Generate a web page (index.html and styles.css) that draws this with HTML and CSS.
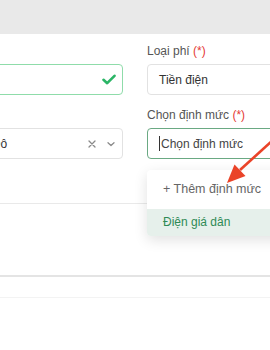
FILE: index.html
```html
<!DOCTYPE html>
<html lang="vi">
<head>
    <meta charset="UTF-8">
    <meta name="viewport" content="width=device-width, initial-scale=1.0">
    <title>Thêm phí</title>
    <link rel="stylesheet" href="styles.css">
</head>
<body>
    <div class="topbar"></div>

    <div class="form">
        <div class="field">
            <label class="label">Khách hàng <span class="req">(*)</span></label>
            <div class="input valid">
                <span class="value">Nguyễn Văn An</span>
                <svg class="check" width="14" height="11" viewBox="0 0 14 11">
                    <path d="M1.5 5.8 L5.2 9.2 L12.5 1.8" fill="none" stroke="#2bb566" stroke-width="2.6" stroke-linecap="round" stroke-linejoin="round"/>
                </svg>
            </div>
        </div>
        <div class="field">
            <label class="label">Loại phí <span class="req">(*)</span></label>
            <div class="input">
                <span class="value">Tiền điện</span>
            </div>
        </div>
        <div class="field">
            <label class="label">Căn hộ <span class="req">(*)</span></label>
            <div class="input">
                <span class="value">Chung cư Thủ Đô</span>
                <span class="icons">
                    <svg width="10" height="10" viewBox="0 0 10 10">
                        <path d="M2 2 L8 8 M8 2 L2 8" stroke="#8a8a8a" stroke-width="1.3" stroke-linecap="round"/>
                    </svg>
                    <svg width="10" height="10" viewBox="0 0 10 10">
                        <path d="M2 3.8 L5 6.6 L8 3.8" fill="none" stroke="#8a8a8a" stroke-width="1.3" stroke-linecap="round" stroke-linejoin="round"/>
                    </svg>
                </span>
            </div>
        </div>
        <div class="field picker">
            <label class="label">Chọn định mức <span class="req">(*)</span></label>
            <div class="input focused">
                <span class="caret"></span>
                <span class="value">Chọn định mức</span>
            </div>
            <div class="dropdown">
                <div class="option add">+ Thêm định mức</div>
                <div class="option active">Điện giá dân</div>
            </div>
        </div>
    </div>

    <div class="spacer"></div>
    <div class="table-head"></div>

    <!-- annotation arrow -->
    <svg class="arrow" width="270" height="350" viewBox="0 0 270 350">
        <line x1="274" y1="139" x2="240" y2="170" stroke="#ea4328" stroke-width="2.6"/>
        <polygon points="227,183 245.5,176 234.5,164.5" fill="#ea4328"/>
    </svg>
</body>
</html>
```

FILE: styles.css
```css
body {
    margin: 0;
    font-family: "Liberation Sans", Arial, sans-serif;
    font-size: 12px;
    color: #333;
    background-color: white;
    overflow: hidden;
    position: relative;
    height: 350px;
}
.topbar {
    height: 34px;
    background-color: #e9e9e9;
}
.form {
    display: grid;
    grid-template-columns: 223px 223px;
    column-gap: 24px;
    row-gap: 12px;
    margin-left: -100px;
    padding: 9px 0 44px;
    border-bottom: 1px solid #e9e9e9;
}
.field {
    display: flex;
    flex-direction: column;
    align-items: flex-start;
    gap: 5px;
    position: relative;
}
.label {
    line-height: 16px;
    color: #555;
}
.req {
    color: #e53935;
}
.input {
    align-self: stretch;
    height: 29px;
    border: 1px solid #e2e2e2;
    border-radius: 4px;
    display: flex;
    align-items: center;
    padding: 0 11px;
    white-space: nowrap;
    overflow: hidden;
}
.value {
    flex: 1;
    color: #333;
}
.input.valid {
    border-color: #8fdcaa;
}
.check {
    margin-right: -5px;
}
.icons {
    display: flex;
    gap: 9px;
    margin-right: -5px;
}
.input.focused {
    border-color: #6aa983;
}
.caret {
    width: 1px;
    height: 15px;
    background-color: #333;
    margin-right: 1px;
}
.focused .value {
    color: #444;
}
.dropdown {
    position: absolute;
    top: 63px;
    left: 0;
    right: 0;
    background-color: white;
    border-radius: 4px;
    box-shadow: 0 4px 14px rgba(0, 0, 0, 0.12);
    overflow: hidden;
}
.option {
    padding: 0 16px;
    line-height: 28px;
}
.option.add {
    color: #666;
    font-size: 12.5px;
    line-height: 39px;
}
.option.active {
    background-color: #e6f0eb;
    color: #2e8a55;
    line-height: 27px;
}
.spacer {
    height: 71px;
}
.table-head {
    height: 20px;
    border-top: 2px solid #e4e4e4;
    border-bottom: 1px solid #f3f3f3;
}
.arrow {
    position: absolute;
    top: 0;
    left: 0;
}
```
